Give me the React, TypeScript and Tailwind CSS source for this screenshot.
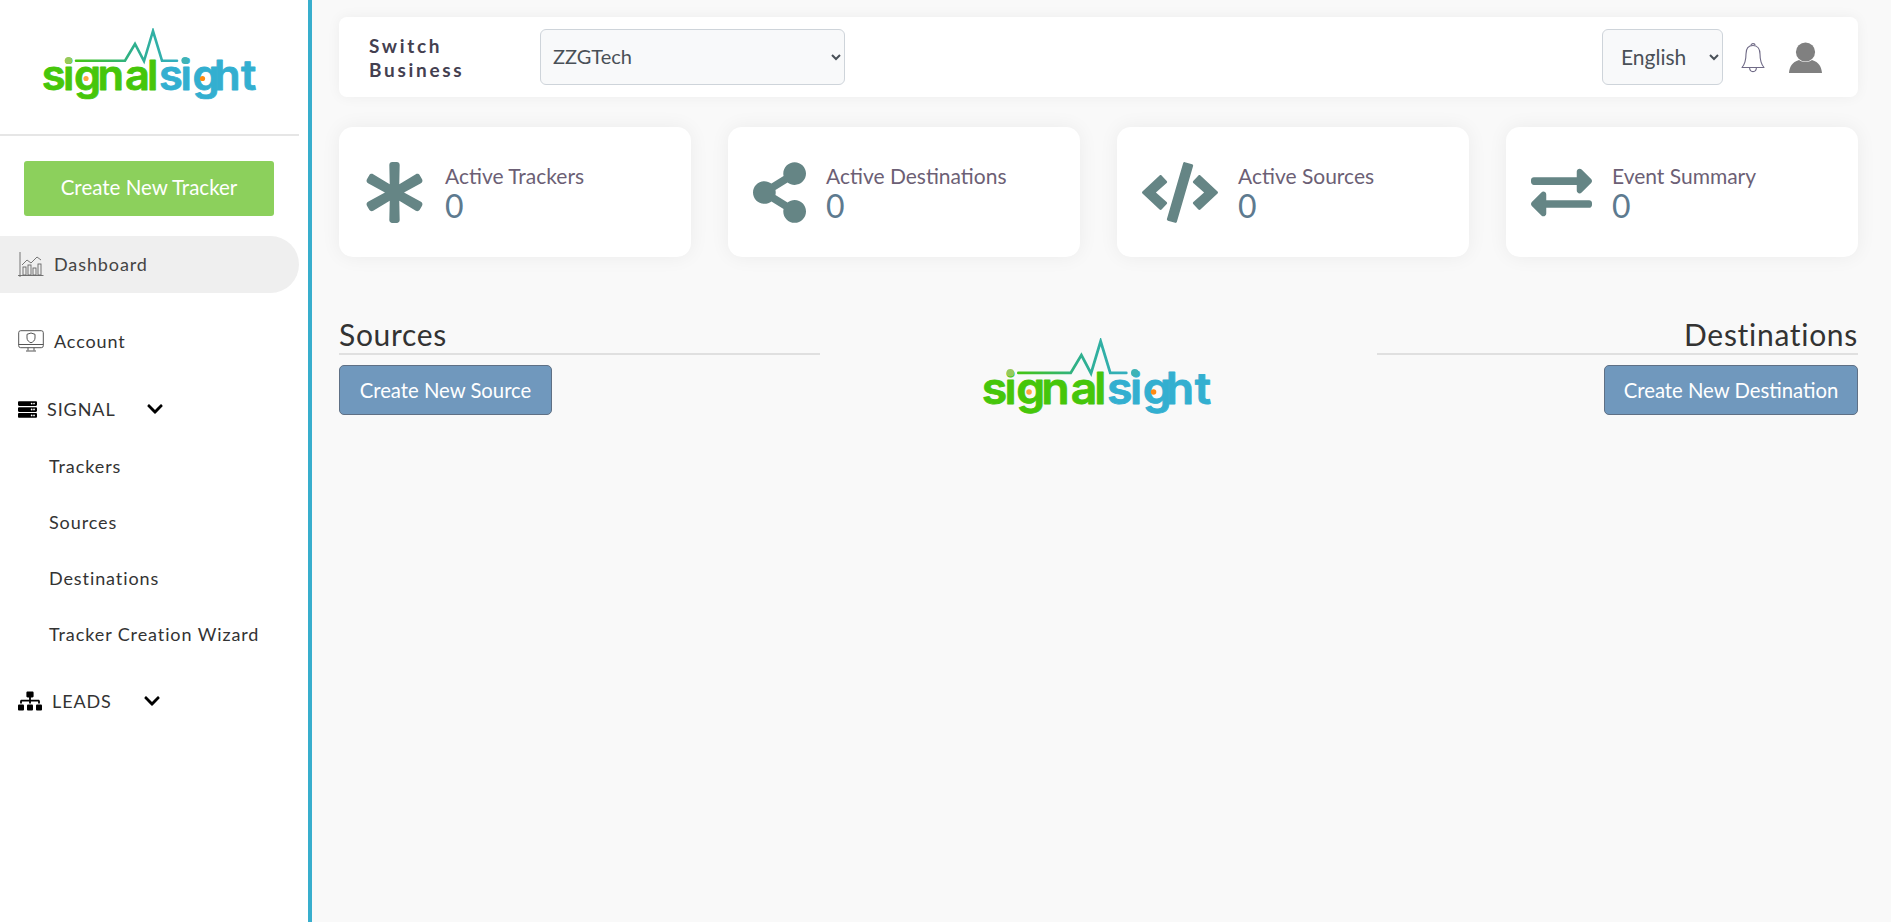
import { FaAsterisk, FaShareAlt, FaCode, FaExchangeAlt, FaServer, FaSitemap, FaChevronDown } from "react-icons/fa";

const font = { fontFamily: 'Lato, sans-serif' };

function Logo({ className }: { className: string }) {
  const textStyle = { fontFamily: 'Inter, sans-serif', fontWeight: 600, fontSize: 41 };
  return (
    <svg viewBox="42 26 218 72" className={className}>
      <defs>
        <linearGradient id="pulse" x1="75" x2="177" y1="0" y2="0" gradientUnits="userSpaceOnUse">
          <stop offset="0" stopColor="#45c60f" />
          <stop offset="0.55" stopColor="#2fb08a" />
          <stop offset="1" stopColor="#33afc0" />
        </linearGradient>
      </defs>
      <path d="M76 58.7H125L135 42L144 59L153 29L162 58.7H177" fill="none" stroke="url(#pulse)" strokeWidth="2.6" strokeLinejoin="miter" strokeLinecap="round" />
      <g transform="scale(1.06 1)">
        <text x="39.4 59.4 69.8 92 117.9 138.7" y="88" fill="#46c60a" stroke="#46c60a" strokeWidth="0.8" strokeLinejoin="round" style={textStyle}>signal</text>
        <text x="150 170.3 181.6 201.9 227.4" y="88" fill="#33afd0" stroke="#33afd0" strokeWidth="0.8" strokeLinejoin="round" style={textStyle}>sight</text>
      </g>
      <circle cx="68.5" cy="58.5" r="3.6" fill="#97c95c" />
      <circle cx="185" cy="58.5" r="3.6" fill="#3fb3b5" />
      <circle cx="86" cy="76.5" r="2.6" fill="#ffa63d" />
      <circle cx="202.5" cy="76.5" r="2.6" fill="#ff8a10" />
    </svg>
  );
}

function ChartIcon() {
  return (
    <svg viewBox="0 0 26 26" className="w-[26px] h-[26px]" fill="none" stroke="#666" strokeWidth="0.9">
      <path d="M2 0V25M0 23.5H25.5" />
      <path d="M4 13L9 8L13 11L19 5L23 8" />
      <rect x="5" y="15" width="3" height="8" />
      <rect x="10" y="13" width="3" height="10" />
      <rect x="15" y="16" width="3" height="7" />
      <rect x="20" y="12" width="3" height="11" />
    </svg>
  );
}

function MonitorIcon() {
  return (
    <svg viewBox="0 0 26 22" className="w-[26px] h-[22px]" fill="none" stroke="#555" strokeWidth="1">
      <rect x="0.7" y="0.7" width="24.6" height="17" rx="2" />
      <path d="M0.7 14.5H25.3M10 17.7V20.5M16 17.7V20.5M8 21H18" />
      <path d="M13 3L17 4.3V8C17 10.5 15 12 13 12.8C11 12 9 10.5 9 8V4.3Z" />
    </svg>
  );
}

function BellIcon() {
  return (
    <svg viewBox="0 0 24 31" className="w-[24px] h-[31px]" fill="none" stroke="#6f6a86" strokeWidth="1.1">
      <path d="M12 3.5C7 3.5 5 7.5 5 12C5 18 4 22 1 25.5H23C20 22 19 18 19 12C19 7.5 17 3.5 12 3.5Z" strokeLinejoin="round" />
      <path d="M10 3.5C10 1 14 1 14 3.5M8.5 25.5C9 31 15 31 15.5 25.5" />
    </svg>
  );
}

function UserIcon() {
  return (
    <svg viewBox="0 0 33 31" className="w-[33px] h-[31px]" fill="#808080">
      <circle cx="16.5" cy="10" r="9.6" />
      <path d="M0 31C0.5 25 3 20 10 18C13 20.5 20 20.5 23 18C30 20 32.5 25 33 31Z" />
    </svg>
  );
}

const stats = [
  { icon: <FaAsterisk className="w-[61px] h-[61px]" />, label: "Active Trackers" },
  { icon: <FaShareAlt className="w-[53px] h-[61px]" />, label: "Active Destinations" },
  { icon: <FaCode className="w-[76px] h-[61px]" />, label: "Active Sources" },
  { icon: <FaExchangeAlt className="w-[61px] h-[61px]" />, label: "Event Summary" },
];

const subItems = ["Trackers", "Sources", "Destinations", "Tracker Creation Wizard"];

export default function App() {
  return (
    <div className="flex min-h-screen bg-[#f9f9f9] text-[#444]" style={font}>
      <aside className="w-[312px] shrink-0 bg-white border-r-4 border-[#38aecd]">
        <div className="w-[299px] h-[136px] border-b-2 border-[#e6e6e6] pl-[42px] pt-[28px]">
          <Logo className="w-[218px] h-[72px]" />
        </div>
        <div className="pl-[24px] pt-[25px]">
          <button className="w-[250px] h-[55px] pb-[3px] bg-[#8cd05c] text-white text-[20.5px] rounded-[3px]">Create New Tracker</button>
        </div>
        <div className="w-[299px] h-[57px] mt-[20px] bg-[#efefef] rounded-r-[29px] flex items-center pl-[18px] gap-[10px] text-[18px] tracking-[0.9px] text-[#444]">
          <ChartIcon />
          <span>Dashboard</span>
        </div>
        <div className="h-[22px] mt-[37px] flex items-center pl-[18px] gap-[10px] text-[18px] tracking-[0.9px] text-[#333]">
          <MonitorIcon />
          <span>Account</span>
        </div>
        <div className="h-[24px] mt-[45px] flex items-center pl-[18px] text-[18px] tracking-[0.9px] text-[#333]">
          <FaServer className="text-[19px] text-black" />
          <span className="ml-[10px] w-[99px]">SIGNAL</span>
          <FaChevronDown className="text-[18px] text-black" />
        </div>
        <div className="mt-[33px] flex flex-col pl-[49px] gap-[32px] text-[18px] tracking-[0.9px] text-[#333]">
          {subItems.map((s) => (
            <div key={s} className="h-[24px] leading-[24px]">{s}</div>
          ))}
        </div>
        <div className="h-[24px] mt-[43px] flex items-center pl-[18px] text-[18px] tracking-[0.9px] text-[#333]">
          <FaSitemap className="text-[24px] text-black" />
          <span className="ml-[10px] w-[91px]">LEADS</span>
          <FaChevronDown className="text-[18px] text-black" />
        </div>
      </aside>

      <main className="flex-1 pl-[27px] pr-[33px] pt-[17px]">
        <header className="h-[80px] bg-white rounded-[8px] shadow-[0_0_14px_rgba(0,0,0,0.05)] flex items-center pl-[30px] pr-[36px]">
          <div className="w-[171px] pt-[2px] text-[19px] leading-[24px] font-bold tracking-[2.7px] text-[#444050]">Switch<br />Business</div>
          <select className="w-[305px] h-[56px] pl-[8px] pr-[2px] pb-[2px] bg-[#f8f9fa] border border-[#ced4da] rounded-[6px] text-[20px] text-[#495057]">
            <option>ZZGTech</option>
          </select>
          <div className="ml-auto flex items-center">
            <select className="w-[121px] h-[56px] pl-[14px] pr-[7px] pb-[2px] bg-[#f8f9fa] border border-[#ced4da] rounded-[6px] text-[21px] text-[#495057]">
              <option>English</option>
            </select>
            <div className="ml-[18px]"><BellIcon /></div>
            <div className="ml-[24px]"><UserIcon /></div>
          </div>
        </header>

        <section className="grid grid-cols-4 gap-[37px] mt-[30px]">
          {stats.map((s) => (
            <div key={s.label} className="h-[130px] bg-white rounded-[14px] shadow-[0_0_20px_rgba(0,0,0,0.06)] flex items-center pl-[25px] gap-[20px]">
              <div className="text-[#658585]">{s.icon}</div>
              <div className="pt-[1px]">
                <div className="text-[21px] leading-[26px] text-[#6c5f75]">{s.label}</div>
                <div className="text-[32px] leading-[34px] text-[#5d7a8f]">0</div>
              </div>
            </div>
          ))}
        </section>

        <section className="flex justify-between items-start mt-[59px]">
          <div className="w-[481px]">
            <h2 className="h-[39px] border-b-2 border-[#e0e0e0] text-[30px] leading-[36px] tracking-[0.7px] text-[#333]">Sources</h2>
            <button className="mt-[10px] w-[213px] h-[50px] bg-[#7098bd] border border-[#5f7085] rounded-[5px] text-white text-[20.3px]">Create New Source</button>
          </div>
          <div className="mt-[22px]"><Logo className="w-[233px] h-[77px]" /></div>
          <div className="w-[481px] flex flex-col items-end">
            <h2 className="w-full h-[39px] border-b-2 border-[#e0e0e0] text-[30px] leading-[36px] tracking-[0.7px] text-right text-[#333]">Destinations</h2>
            <button className="mt-[10px] w-[254px] h-[50px] bg-[#7098bd] border border-[#5f7085] rounded-[5px] text-white text-[20.3px]">Create New Destination</button>
          </div>
        </section>
      </main>
    </div>
  );
}
